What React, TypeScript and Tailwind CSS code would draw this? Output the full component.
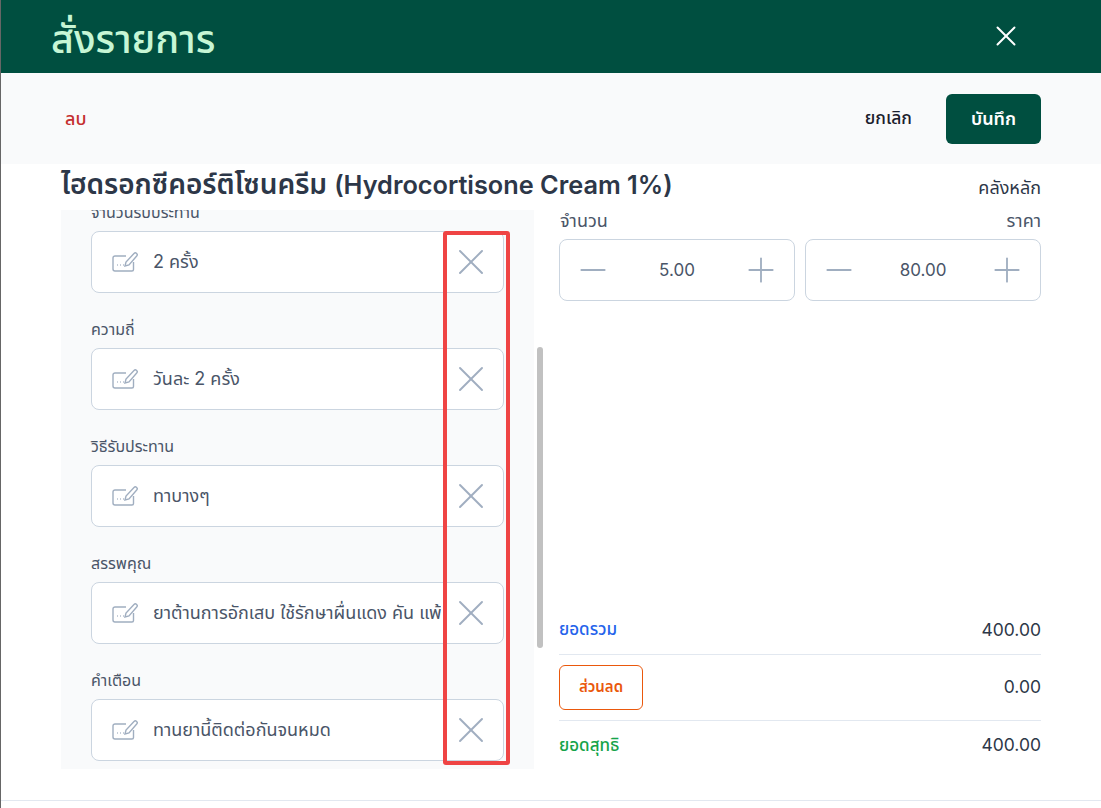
import { Minus, Plus, X } from 'lucide-react'

const fields = [
  { label: 'จำนวนรับประทาน', value: '2 ครั้ง' },
  { label: 'ความถี่', value: 'วันละ 2 ครั้ง' },
  { label: 'วิธีรับประทาน', value: 'ทาบางๆ' },
  { label: 'สรรพคุณ', value: 'ยาต้านการอักเสบ ใช้รักษาผื่นแดง คัน แพ้ ผิวหนังอักเสบ' },
  { label: 'คำเตือน', value: 'ทานยานี้ติดต่อกันจนหมด' },
]

function NoteIcon() {
  return (
    <svg width="26" height="22" viewBox="0 0 26 22" fill="none" stroke="#a0aec0" strokeWidth="1.4" className="shrink-0">
      <path d="M14 5H3a2 2 0 0 0-2 2v11a2 2 0 0 0 2 2h17a1.500 1.500 0 0 0 1.500-1.500V11" />
      <path d="M13 15l1-4 8-8.500a1.800 1.800 0 0 1 2.700 2.500L17 14z" />
      <path d="M5 14h.8M8 14h.8M11 14h.8" />
    </svg>
  )
}

function Stepper({ value }: { value: string }) {
  return (
    <div className="flex h-[62px] flex-1 items-center justify-between rounded-lg border border-[#cbd5e0] px-[13px]">
      <Minus size={40} strokeWidth={1.1} className="text-[#a0aec0]" />
      <span className="pt-[1px] text-[17px] text-[#4a5568]">{value}</span>
      <Plus size={40} strokeWidth={1.1} className="text-[#a0aec0]" />
    </div>
  )
}

export default function App() {
  return (
    <div className="relative flex h-[808px] flex-col overflow-hidden border-l border-[#666] bg-white font-['Inter','Noto_Sans_Thai','Noto_Sans',sans-serif]">
      <header className="flex h-[73px] shrink-0 items-center justify-between bg-[#004f40] pl-[50px] pr-[78px]">
        <h1 className="pt-[6px] text-[39.5px] font-medium leading-none text-[#c6f6d5]">สั่งรายการ</h1>
        <X size={34} strokeWidth={1.4} className="-mt-[2px] text-white" />
      </header>

      <div className="flex h-[91px] shrink-0 items-center justify-between bg-[#f9fafb] pl-[64px] pr-[60px]">
        <button className="text-lg font-medium text-[#c53030]">ลบ</button>
        <div className="flex items-center gap-[34px]">
          <button className="text-[17.5px] font-medium text-[#1a202c]">ยกเลิก</button>
          <button className="h-[50px] w-[95px] rounded-md bg-[#004f40] text-lg font-semibold text-white">บันทึก</button>
        </div>
      </div>

      <div className="flex h-[46px] shrink-0 items-start justify-between pl-[60px] pr-[60px]">
        <h2 className="-mt-[1px] text-[28px] font-semibold leading-[42px] text-[#2d3748]">
          ไฮดรอกซีคอร์ติโซนครีม <span className="text-[25.3px]">(Hydrocortisone Cream 1%)</span>
        </h2>
        <span className="mt-[10px] text-lg leading-[28px] text-[#2d3748]">คลังหลัก</span>
      </div>

      <div className="flex min-h-0 flex-1 pl-[60px] pr-[60px]">
        <div className="h-[559px] w-[473px] shrink-0 overflow-hidden bg-[#f9fafb] pl-[30px] pr-[30px]">
          <div className="-mt-[6px] flex flex-col gap-[28px]">
            {fields.map((f) => (
              <div key={f.label}>
                <label className="block h-[27px] text-base leading-[16px] text-[#4a5568]">{f.label}</label>
                <div className="flex h-[62px] items-center rounded-lg border border-[#cbd5e0] bg-white pl-5">
                  <NoteIcon />
                  <span className="ml-[15px] min-w-0 flex-1 overflow-hidden whitespace-nowrap text-lg text-[#4a5568]">{f.value}</span>
                  <div className="flex h-full w-[62px] shrink-0 items-center justify-center pr-[2px]">
                    <X size={44} strokeWidth={1.05} className="text-[#a0aec0]" />
                  </div>
                </div>
              </div>
            ))}
          </div>
        </div>

        <div className="ml-[3px] mt-[137px] h-[301px] w-[6px] shrink-0 rounded-full bg-[#c1c1c1]" />

        <div className="ml-[16px] flex h-[559px] min-w-0 flex-1 flex-col">
          <div className="-mt-[1px] flex items-center justify-between text-lg leading-[24px] text-[#4a5568]">
            <span className="pl-[1px]">จำนวน</span>
            <span>ราคา</span>
          </div>
          <div className="mt-[6px] flex gap-[10px]">
            <Stepper value="5.00" />
            <Stepper value="80.00" />
          </div>

          <div className="mt-auto flex flex-col">
            <div className="flex h-[52px] items-center justify-between border-b border-[#e2e8f0]">
              <span className="pt-[3px] text-[17px] font-medium text-[#2563eb]">ยอดรวม</span>
              <span className="pt-[3px] text-[17.5px] text-[#2d3748]">400.00</span>
            </div>
            <div className="flex h-[66px] items-center justify-between border-b border-[#e2e8f0]">
              <button className="h-[45px] w-[84px] rounded-md border border-[#ea580c] text-[15px] font-semibold text-[#ea580c]">ส่วนลด</button>
              <span className="text-[17.5px] text-[#2d3748]">0.00</span>
            </div>
            <div className="flex h-[48px] items-center justify-between">
              <span className="pt-[1px] text-[17px] font-medium text-[#16a34a]">ยอดสุทธิ</span>
              <span className="pt-[1px] text-[17.5px] text-[#2d3748]">400.00</span>
            </div>
          </div>
        </div>
      </div>

      <div className="absolute bottom-[7px] left-0 right-0 h-px bg-[#e2e8f0]" />
      {/* red highlight drawn over the remove buttons */}
      <div className="absolute left-[442px] top-[231px] h-[534px] w-[67px] rounded-[3px] border-[4px] border-[#ef4444]" />
    </div>
  )
}
